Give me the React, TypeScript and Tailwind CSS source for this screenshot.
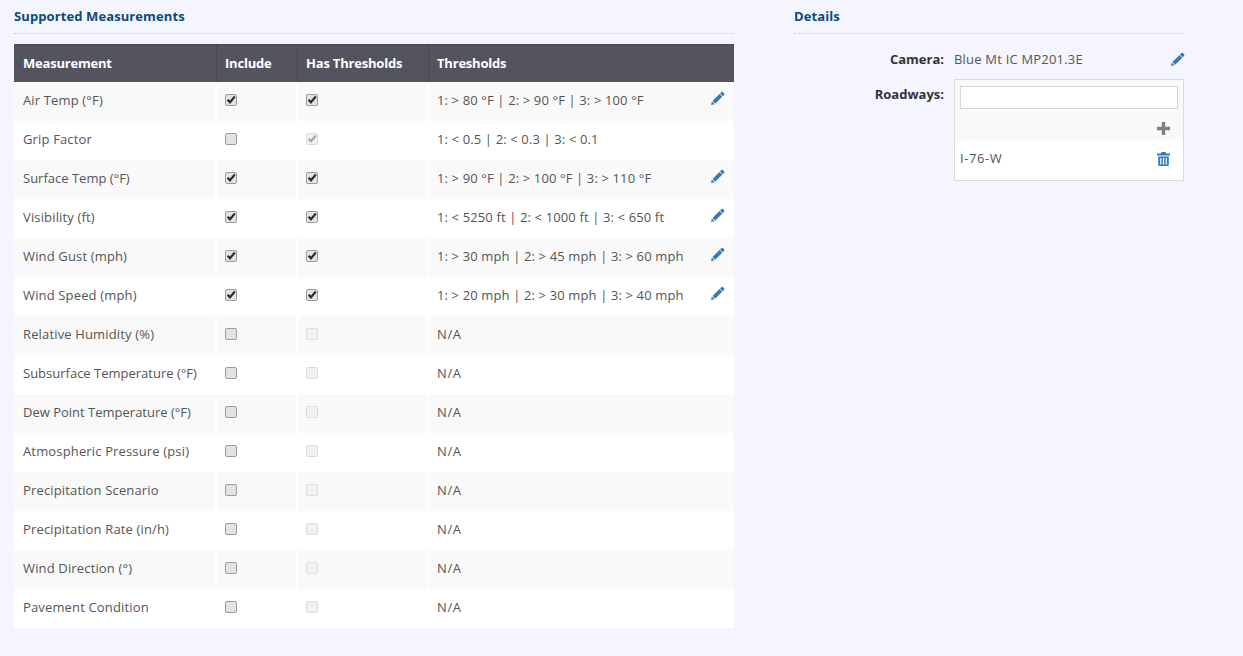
import React from "react";

const rows: { name: string; inc: boolean; has: "on" | "dimOn" | "dimOff"; th: string; edit?: boolean; tight?: boolean }[] = [
  { name: "Air Temp (°F)", inc: true, has: "on", th: "1: > 80 °F | 2: > 90 °F | 3: > 100 °F", edit: true },
  { name: "Grip Factor", inc: false, has: "dimOn", th: "1: < 0.5 | 2: < 0.3 | 3: < 0.1" },
  { name: "Surface Temp (°F)", inc: true, has: "on", th: "1: > 90 °F | 2: > 100 °F | 3: > 110 °F", edit: true, tight: true },
  { name: "Visibility (ft)", inc: true, has: "on", th: "1: < 5250 ft | 2: < 1000 ft | 3: < 650 ft", edit: true },
  { name: "Wind Gust (mph)", inc: true, has: "on", th: "1: > 30 mph | 2: > 45 mph | 3: > 60 mph", edit: true },
  { name: "Wind Speed (mph)", inc: true, has: "on", th: "1: > 20 mph | 2: > 30 mph | 3: > 40 mph", edit: true },
  { name: "Relative Humidity (%)", inc: false, has: "dimOff", th: "N/A" },
  { name: "Subsurface Temperature (°F)", inc: false, has: "dimOff", th: "N/A", tight: true },
  { name: "Dew Point Temperature (°F)", inc: false, has: "dimOff", th: "N/A", tight: true },
  { name: "Atmospheric Pressure (psi)", inc: false, has: "dimOff", th: "N/A" },
  { name: "Precipitation Scenario", inc: false, has: "dimOff", th: "N/A" },
  { name: "Precipitation Rate (in/h)", inc: false, has: "dimOff", th: "N/A" },
  { name: "Wind Direction (°)", inc: false, has: "dimOff", th: "N/A" },
  { name: "Pavement Condition", inc: false, has: "dimOff", th: "N/A" },
];

function Pencil({ className = "" }: { className?: string }) {
  return (
    <svg viewBox="0 0 14 14" className={`w-[14px] h-[14px] fill-[#337ab7] ${className}`}>
      <path d="M10.3 1.2c.5-.5 1.2-.5 1.7 0l1 1c.5.5.5 1.2 0 1.7l-1.3 1.3-2.7-2.7z" />
      <path d="M8.5 3l2.7 2.7-7 7-2.7-2.7z" />
      <path d="M.9 10.6l2.6 2.6L0 14z" />
    </svg>
  );
}

function Trash() {
  return (
    <svg viewBox="0 0 13 14" className="w-[13px] h-[14px] fill-[#337ab7]">
      <path
        fillRule="evenodd"
        d="M4.5 0h4l.6 1.5H12.5a.5.5 0 0 1 .5.5v1.5H0V2a.5.5 0 0 1 .5-.5h3.4zM1.2 4.5h10.6v8A1.5 1.5 0 0 1 10.3 14H2.7a1.5 1.5 0 0 1-1.5-1.5zM3.2 6v6.5h1.2V6zM5.9 6v6.5h1.2V6zM8.6 6v6.5h1.2V6z"
      />
    </svg>
  );
}

function Plus() {
  return (
    <svg viewBox="0 0 13 13" className="w-[13px] h-[13px] fill-[#808088]">
      <path d="M4.8 0h3.4v4.8H13v3.4H8.2V13H4.8V8.2H0V4.8h4.8z" />
    </svg>
  );
}

function Box({ checked, dim }: { checked: boolean; dim?: boolean }) {
  return (
    <span
      className={`relative block w-[12px] h-[12px] rounded-[2px] border ${
        dim ? "border-[#dcdcdc] bg-[#f1f1f1]" : "border-[#9b9b9b] bg-[#e3e3e3]"
      }`}
    >
      {checked && (
        <svg
          viewBox="0 0 10 10"
          className={`absolute left-0 top-0 w-[10px] h-[10px] ${dim ? "fill-[#a8a8a8]" : "fill-[#2b2b2b]"}`}
        >
          <path d="M.8 5.4L2.4 3.9 4 5.5 8 .8 9.6 2.2 4 9z" />
        </svg>
      )}
    </span>
  );
}

export default function App() {
  return (
    <div
      className="h-[656px] overflow-hidden bg-[#f4f5ff] flex text-[13px] text-[#555555] pl-[14px] pt-[7px]"
      style={{ fontFamily: '"Open Sans", sans-serif' }}
    >
      <div className="w-[720px]">
        <h2 className="h-[27px] border-b border-dotted border-[#c9cad6] text-[13px] leading-[18px] tracking-[0.1px] font-bold text-[#0b4a78]">
          Supported Measurements
        </h2>
        <div className="mt-[10px] bg-white">
          <div className="flex h-[38px] bg-[#54545e] text-white font-bold tracking-[-0.2px] border-t border-[#4a4a54] items-center">
            <div className="w-[203px] pl-[9px] h-full flex items-center border-r border-[#47474f]">Measurement</div>
            <div className="w-[81px] pl-[8px] h-full flex items-center border-r border-[#47474f]">Include</div>
            <div className="w-[131px] pl-[8px] h-full flex items-center border-r border-[#47474f]">Has Thresholds</div>
            <div className="flex-1 pl-[8px]">Thresholds</div>
          </div>
          {rows.map((r, i) => (
            <div key={r.name} className={`flex h-[39px] items-center ${i % 2 === 0 ? "bg-[#f9f9f9]" : "bg-white"}`}>
              <div className={`w-[203px] pl-[9px] pb-[2px] h-full flex items-center border-r-2 border-white ${r.tight ? "" : "tracking-[0.15px]"}`}>
                {r.name}
              </div>
              <div className="w-[81px] pl-[8px] pb-[4px] h-full flex items-center border-r-2 border-white">
                <Box checked={r.inc} />
              </div>
              <div className="w-[131px] pl-[8px] pb-[4px] h-full flex items-center border-r-2 border-white">
                <Box checked={r.has !== "dimOff"} dim={r.has !== "on"} />
              </div>
              <div className="flex-1 pl-[8px] pr-[9px] pb-[2px] h-full flex items-center justify-between">
                <span className={r.th === "N/A" ? "tracking-[0.6px]" : "tracking-[0.13px]"}>{r.th}</span>
                {r.edit && <Pencil className="-mt-[5px]" />}
              </div>
            </div>
          ))}
        </div>
      </div>
      <div className="w-[390px] ml-[60px]">
        <h2 className="h-[27px] border-b border-dotted border-[#c9cad6] text-[13px] leading-[18px] tracking-[0.1px] font-bold text-[#0b4a78]">
          Details
        </h2>
        <div className="flex items-center mt-[15px] h-[22px]">
          <div className="w-[160px] text-right pr-[10px] font-bold text-[#333333]">Camera:</div>
          <div className="flex-1 tracking-[0.2px]">Blue Mt IC MP201.3E</div>
          <Pencil className="-mt-[2px] -mr-[1px]" />
        </div>
        <div className="flex mt-[8px]">
          <div className="w-[160px] text-right pr-[10px] font-bold text-[#333333] pt-[6px]">Roadways:</div>
          <div className="flex-1 h-[102px] border border-[#d9dbe3] bg-white">
            <div className="bg-[#f9f9f9] h-[60px] px-[5px] pt-[6px]">
              <div className="h-[23px] bg-white border border-[#d5d7e0]" />
              <div className="flex justify-end pr-[8px] mt-[13px]">
                <Plus />
              </div>
            </div>
            <div className="flex items-center justify-between h-[37px] pl-[5px] pr-[13px]">
              <span className="tracking-[0.6px]">I-76-W</span>
              <Trash />
            </div>
          </div>
        </div>
      </div>
    </div>
  );
}
